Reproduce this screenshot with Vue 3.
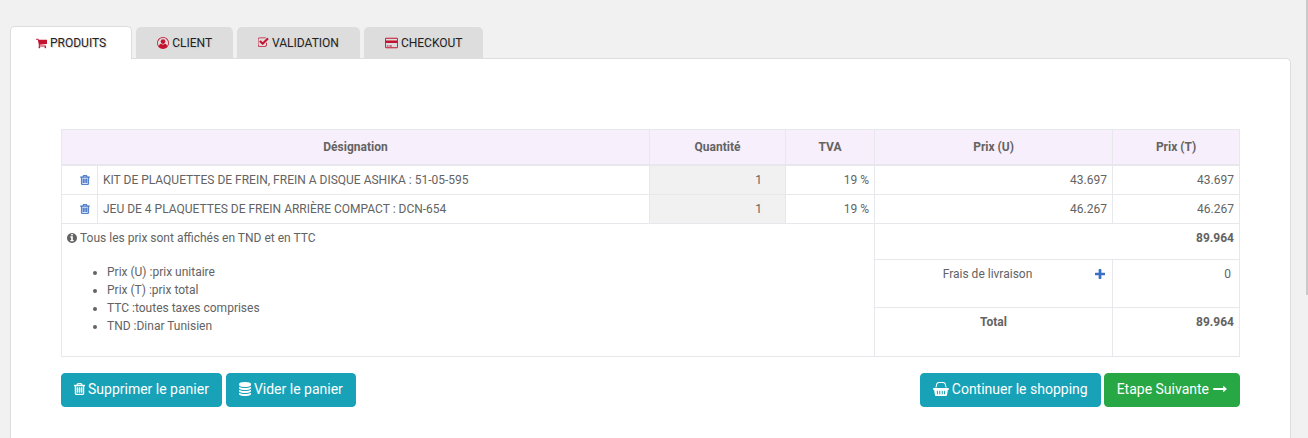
<script setup>
import { ref } from 'vue'

const tabs = [
  { label: 'PRODUITS', icon: 'cart' },
  { label: 'CLIENT', icon: 'user' },
  { label: 'VALIDATION', icon: 'check' },
  { label: 'CHECKOUT', icon: 'card' },
]
const active = ref('PRODUITS')

const rows = ref([
  { id: 1, name: 'KIT DE PLAQUETTES DE FREIN, FREIN A DISQUE ASHIKA : 51-05-595', qty: 1, tva: '19 %', unit: '43.697', total: '43.697' },
  { id: 2, name: 'JEU DE 4 PLAQUETTES DE FREIN ARRIÈRE COMPACT : DCN-654', qty: 1, tva: '19 %', unit: '46.267', total: '46.267' },
])

const notes = [
  'Prix (U) :prix unitaire',
  'Prix (T) :prix total',
  'TTC :toutes taxes comprises',
  'TND :Dinar Tunisien',
]

const trash = 'M576 736v576q0 14-9 23t-23 9h-64q-14 0-23-9t-9-23v-576q0-14 9-23t23-9h64q14 0 23 9t9 23zm256 0v576q0 14-9 23t-23 9h-64q-14 0-23-9t-9-23v-576q0-14 9-23t23-9h64q14 0 23 9t9 23zm256 0v576q0 14-9 23t-23 9h-64q-14 0-23-9t-9-23v-576q0-14 9-23t23-9h64q14 0 23 9t9 23zm128 724v-948h-896v948q0 22 7 40.5t14.5 27 10.5 8.5h832q3 0 10.5-8.5t14.5-27 7-40.5zm-672-1076h448l-48-117q-7-9-17-11h-317q-10 2-17 11zm928 32v64q0 14-9 23t-23 9h-96v948q0 83-47 143.5t-113 60.5h-832q-66 0-113-58.5t-47-141.5v-952h-96q-14 0-23-9t-9-23v-64q0-14 9-23t23-9h309l70-167q15-37 54-63t79-26h320q40 0 79 26t54 63l70 167h309q14 0 23 9t9 23z'
</script>

<template>
  <div class="page">
    <nav class="tabs" aria-label="Etapes">
      <a
        v-for="tab in tabs"
        :key="tab.label"
        href="#"
        class="tab"
        :class="{ active: active === tab.label }"
        @click.prevent="active = tab.label"
      >
        <svg v-if="tab.icon === 'cart'" class="icon slim" viewBox="64 128 1664 1664" aria-hidden="true">
          <path d="M704 1536q0 52-38 90t-90 38-90-38-38-90 38-90 90-38 90 38 38 90zm896 0q0 52-38 90t-90 38-90-38-38-90 38-90 90-38 90 38 38 90zm128-1088v512q0 24-16.5 42.5t-40.5 21.5l-1044 122q13 60 13 70 0 16-24 64h920q26 0 45 19t19 45-19 45-45 19h-1024q-26 0-45-19t-19-45q0-11 8-31.5t16-36 21.5-40 15.5-29.5l-177-823h-204q-26 0-45-19t-19-45 19-45 45-19h256q16 0 28.5 6.5t19.5 15.5 13 24.5 8 26 5.5 29.5 4.5 26h1201q26 0 45 19t19 45z" />
        </svg>
        <svg v-else-if="tab.icon === 'user'" class="icon" viewBox="0 0 1792 1792" aria-hidden="true">
          <path fill-rule="evenodd" d="M896 0a896 896 0 1 1 0 1792a896 896 0 1 1 0-1792zM896 128a768 768 0 0 0-614 1229c42-205 140-367 331-367c76 73 171 116 283 116s207-43 283-116c191 0 289 162 331 367a768 768 0 0 0-614-1229z" />
          <circle class="cut" cx="896" cy="690" r="400" />
          <circle cx="896" cy="690" r="350" />
        </svg>
        <svg v-else-if="tab.icon === 'check'" class="icon slim" viewBox="128 64 1664 1664" aria-hidden="true">
          <path d="M1472 930v318q0 119-84.5 203.5t-203.5 84.5h-832q-119 0-203.5-84.5t-84.5-203.5v-832q0-119 84.5-203.5t203.5-84.5h832q63 0 117 25 15 7 18 23 3 17-9 29l-49 49q-10 10-23 10-3 0-9-2-23-6-45-6h-832q-66 0-113 47t-47 113v832q0 66 47 113t113 47h832q66 0 113-47t47-113v-254q0-13 9-22l64-64q10-10 23-10 6 0 12 3 20 8 20 29zm231-489l-814 814q-24 24-57 24t-57-24l-430-430q-24-24-24-57t24-57l110-110q24-24 57-24t57 24l263 263 647-647q24-24 57-24t57 24l110 110q24 24 24 57t-24 57z" />
        </svg>
        <svg v-else class="icon card" viewBox="0 0 1920 1792" aria-hidden="true">
          <path fill-rule="evenodd" d="M160 128h1600a160 160 0 0 1 160 160v1216a160 160 0 0 1-160 160h-1600a160 160 0 0 1-160-160v-1216a160 160 0 0 1 160-160zM160 256q-32 0-32 32v224h1664v-224q0-32-32-32zM128 896v608q0 32 32 32h1600q32 0 32-32v-608zM256 1280h256v128h-256zM640 1280h384v128h-384z" />
        </svg>
        <span>{{ tab.label }}</span>
      </a>
    </nav>

    <main class="panel">
      <table class="cart">
        <colgroup>
          <col class="c-del" />
          <col />
          <col class="c-qty" />
          <col class="c-tva" />
          <col class="c-unit" />
          <col class="c-total" />
        </colgroup>
        <thead>
          <tr>
            <th colspan="2">Désignation</th>
            <th>Quantité</th>
            <th>TVA</th>
            <th>Prix (U)</th>
            <th>Prix (T)</th>
          </tr>
        </thead>
        <tbody>
          <tr v-for="row in rows" :key="row.id">
            <td class="del">
              <button type="button" class="mini" aria-label="Supprimer">
                <svg class="bin" viewBox="64 128 1408 1536" aria-hidden="true"><path :d="trash" /></svg>
              </button>
            </td>
            <td>{{ row.name }}</td>
            <td class="qty"><input v-model="row.qty" type="number" min="1" aria-label="Quantité" /></td>
            <td class="num">{{ row.tva }}</td>
            <td class="num">{{ row.unit }}</td>
            <td class="num">{{ row.total }}</td>
          </tr>
          <tr class="subtotal">
            <td colspan="4" rowspan="3">
              <div class="info">
                <svg class="dot" viewBox="128 128 1536 1536" aria-hidden="true">
                  <path d="M1152 1376v-160q0-14-9-23t-23-9h-96v-512q0-14-9-23t-23-9h-320q-14 0-23 9t-9 23v160q0 14 9 23t23 9h96v320h-96q-14 0-23 9t-9 23v160q0 14 9 23t23 9h448q14 0 23-9t9-23zm-128-896v-160q0-14-9-23t-23-9h-192q-14 0-23 9t-9 23v160q0 14 9 23t23 9h192q14 0 23-9t9-23zm640 416q0 209-103 385.5t-279.5 279.5-385.5 103-385.5-103-279.5-279.5-103-385.5 103-385.5 279.5-279.5 385.5-103 385.5 103 279.5 279.5 103 385.5z" />
                </svg>
                <span>Tous les prix sont affichés en TND et en TTC</span>
              </div>
              <ul>
                <li v-for="note in notes" :key="note">{{ note }}</li>
              </ul>
            </td>
            <td colspan="2" class="num strong">89.964</td>
          </tr>
          <tr class="shipping">
            <td class="mid">
              <button type="button" class="mini plus" aria-label="Ajouter">
                <svg viewBox="192 192 1408 1408" aria-hidden="true">
                  <path d="M1600 800v192q0 40-28 68t-68 28h-416v416q0 40-28 68t-68 28h-192q-40 0-68-28t-28-68v-416h-416q-40 0-68-28t-28-68v-192q0-40 28-68t68-28h416v-416q0-40 28-68t68-28h192q40 0 68 28t28 68v416h416q40 0 68 28t28 68z" />
                </svg>
              </button>
              Frais de livraison
            </td>
            <td class="num fee">0</td>
          </tr>
          <tr class="total">
            <td class="mid strong">Total</td>
            <td class="num strong">89.964</td>
          </tr>
        </tbody>
      </table>

      <div class="actions">
        <div class="group">
          <button type="button" class="btn">
            <svg class="b-bin" viewBox="64 128 1408 1536" aria-hidden="true"><path :d="trash" /></svg>
            <span>Supprimer le panier</span>
          </button>
          <button type="button" class="btn">
            <svg class="b-db" viewBox="128 0 1536 1792" aria-hidden="true">
              <path d="M896 768q237 0 443-43t325-127v170q0 69-103 128t-280 93.5-385 34.5-385-34.5-280-93.5-103-128v-170q119 84 325 127t443 43zm0 768q237 0 443-43t325-127v170q0 69-103 128t-280 93.5-385 34.5-385-34.5-280-93.5-103-128v-170q119 84 325 127t443 43zm0-384q237 0 443-43t325-127v170q0 69-103 128t-280 93.5-385 34.5-385-34.5-280-93.5-103-128v-170q119 84 325 127t443 43zm0-1152q208 0 385 34.5t280 93.5 103 128v128q0 69-103 128t-280 93.5-385 34.5-385-34.5-280-93.5-103-128v-128q0-69 103-128t280-93.5 385-34.5z" />
            </svg>
            <span>Vider le panier</span>
          </button>
        </div>
        <div class="group end">
          <button type="button" class="btn">
            <svg class="b-basket" viewBox="0 0 2048 1792" aria-hidden="true">
              <path fill-rule="evenodd" d="M128 768h1792a128 128 0 0 1 0 256h-15l-115 662q-8 46-44 76t-82 30h-1280q-46 0-82-30t-44-76l-115-662h-15a128 128 0 0 1 0-256zM485 1120l32 448h128l-32-448zM800 1120v448h128v-448zM1120 1120v448h128v-448zM1435 1120l-32 448h128l32-448z" />
              <path d="M310 704l98-430q25-125 122-200t222-74h544q125 0 222 74t122 200l98 430h-132l-90-400q-20-80-80-128t-140-48h-544q-80 0-140 48t-80 128l-90 400z" />
            </svg>
            <span>Continuer le shopping</span>
          </button>
          <button type="button" class="btn next">
            <span>Etape Suivante</span>
            <svg class="b-arrow" viewBox="0 512 1728 768" aria-hidden="true">
              <path d="M1728 893q0 14-10 24l-384 354q-16 14-35 6-19-9-19-29v-224h-1248q-14 0-23-9t-9-23v-192q0-14 9-23t23-9h1248v-224q0-21 19-29t35 5l384 350q10 10 10 23z" />
            </svg>
          </button>
        </div>
      </div>
    </main>
    <div class="scroll-thumb" aria-hidden="true"></div>
  </div>
</template>

<style>
body {
  background: #f1f1f1;
}
</style>

<style scoped>
.page {
  position: relative;
  box-sizing: border-box;
  min-height: 100vh;
  padding: 26px 17px 0 10px;
  display: flex;
  flex-direction: column;
  font-family: Roboto, "Liberation Sans", sans-serif;
  font-size: 12px;
  line-height: 18px;
  color: #636363;
}

svg {
  display: block;
  flex: none;
  fill: currentColor;
}

.tabs {
  display: flex;
  align-items: flex-end;
  gap: 4px;
  height: 32px;
}

.tab {
  box-sizing: border-box;
  height: 31px;
  padding: 0 21px;
  display: flex;
  align-items: center;
  gap: 3px;
  background: #ddd;
  border-radius: 5px 5px 0 0;
  color: #222;
  text-decoration: none;
  text-shadow: 1px 1px 1px #ccc;
}

.tab.active {
  position: relative;
  z-index: 1;
  height: 33px;
  margin-bottom: -1px;
  padding: 0 25px;
  background: #fff;
  border: 1px solid #ddd;
  border-bottom: 0;
}

.icon {
  width: 12px;
  height: 12px;
  color: #c4122f;
}

.icon.slim {
  width: 11px;
  height: 11px;
}

.icon.card {
  width: 13px;
}

.cut {
  fill: #ddd;
}

.panel {
  flex: 1;
  padding: 70px 50px 31px;
  background: #fff;
  border: 1px solid #ddd;
  border-bottom: 0;
  border-radius: 0 5px 0 0;
}

.cart {
  width: 100%;
  table-layout: fixed;
  border-collapse: collapse;
}

.c-del { width: 36px; }
.c-qty { width: 136px; }
.c-tva { width: 89px; }
.c-unit { width: 238px; }
.c-total { width: 127px; }

th,
td {
  padding: 5px;
  border: 1px solid #e6e8eb;
  text-align: left;
  vertical-align: top;
}

th {
  padding: 8px 5px;
  background: #f7effb;
  border-bottom-width: 2px;
  text-align: center;
  font-weight: 700;
}

td.num {
  text-align: right;
}

td.mid {
  text-align: center;
}

td.fee {
  padding-right: 8px;
}

.strong {
  font-weight: 700;
}

.subtotal { height: 36px; }
.shipping { height: 48px; }
.total { height: 49px; }

.mini {
  height: 18px;
  padding: 0;
  border: 0;
  background: none;
  color: #3a70c4;
  display: flex;
  align-items: center;
  cursor: pointer;
}

.del .mini {
  margin-left: auto;
}

td.del {
  padding-right: 7px;
}

.bin {
  width: 10px;
  height: 10px;
}

.bin path,
.b-bin path {
  stroke: currentColor;
  stroke-width: 60;
}

.plus {
  float: right;
  margin-right: 2px;
}

.plus svg {
  width: 10px;
  height: 10px;
}

td.qty {
  background: #f1f1f1;
}

.qty input {
  display: block;
  box-sizing: border-box;
  width: 100%;
  height: 18px;
  margin: 0;
  padding: 0 3px 0 0;
  border: 0;
  background: transparent;
  color: inherit;
  font: inherit;
  text-align: right;
}

.info {
  display: flex;
  align-items: center;
  gap: 3px;
}

.dot {
  width: 10px;
  height: 10px;
}

ul {
  margin: 16px 0;
  padding-left: 40px;
}

.actions {
  margin-top: 16px;
  display: flex;
  justify-content: space-between;
}

.group {
  display: flex;
  gap: 4px;
}

.group.end {
  gap: 3px;
}

.btn {
  display: flex;
  align-items: center;
  gap: 3px;
  padding: 4px 12px 6px;
  border: 1px solid #17a2b8;
  border-radius: 4px;
  background: #17a2b8;
  color: #fff;
  font-family: inherit;
  font-size: 14px;
  line-height: 22px;
  white-space: nowrap;
  cursor: pointer;
}

.btn.next {
  gap: 4px;
  border-color: #28a745;
  background: #28a745;
}

.b-bin {
  width: 11px;
  height: 12px;
}

.b-db {
  width: 12px;
  height: 14px;
}

.b-basket {
  width: 16px;
  height: 14px;
}

.b-arrow {
  width: 14px;
  height: 6px;
}

.scroll-thumb {
  position: absolute;
  top: 0;
  right: 0;
  width: 2px;
  height: 295px;
  background: #c9c9c9;
}
</style>
